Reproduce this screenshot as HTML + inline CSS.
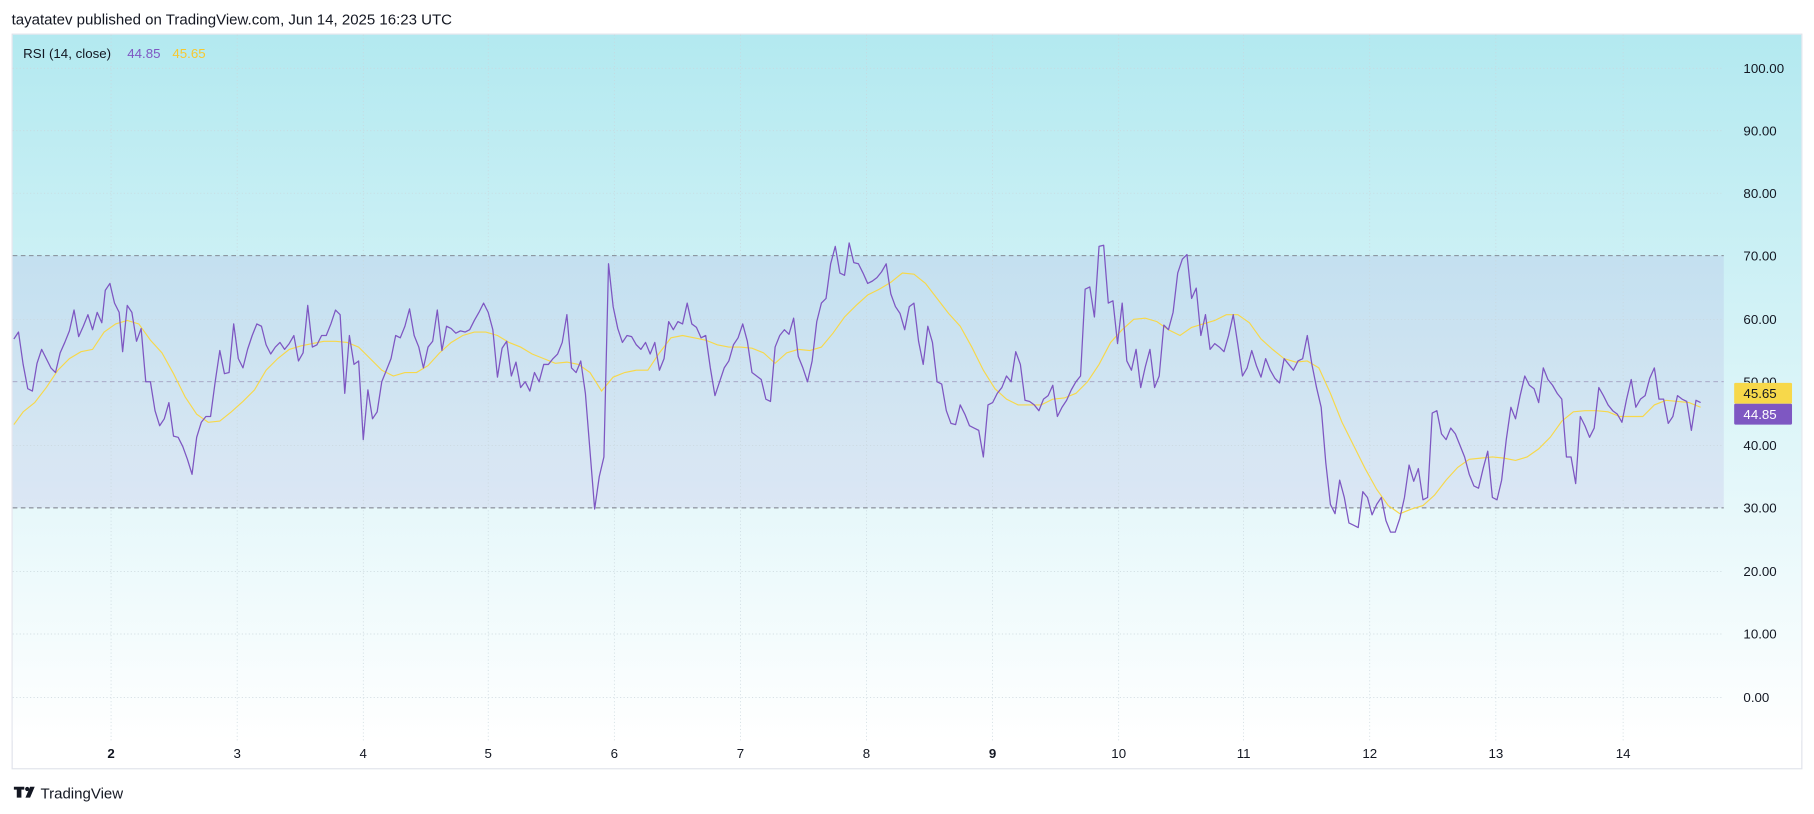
<!DOCTYPE html>
<html><head><meta charset="utf-8"><style>
html,body{margin:0;padding:0;background:#fff;width:1814px;height:814px;overflow:hidden}
svg{display:block;font-family:"Liberation Sans",sans-serif}
</style></head><body>
<svg width="1814" height="814" viewBox="0 0 1568 703.6" xmlns="http://www.w3.org/2000/svg">
<defs>
<linearGradient id="bg" x1="0" y1="0" x2="0" y2="1">
<stop offset="0" stop-color="#b3e9f0"/><stop offset="0.45" stop-color="#d6f3f7"/><stop offset="1" stop-color="#ffffff"/>
</linearGradient>
</defs>
<text x="10" y="21" font-size="13" fill="#131722">tayatatev published on TradingView.com, Jun 14, 2025 16:23 UTC</text>
<rect x="10.5" y="29.5" width="1547" height="635" fill="#fff" stroke="#e0e3eb"/>
<rect x="11" y="30" width="1546" height="610" fill="url(#bg)"/>
<rect x="11" y="221" width="1479" height="218" fill="#7e57c2" fill-opacity="0.1"/>
<g stroke="#c9d6dc" stroke-width="0.6" stroke-dasharray="1,2">
<line x1="96" y1="30" x2="96" y2="640"/><line x1="205" y1="30" x2="205" y2="640"/><line x1="314" y1="30" x2="314" y2="640"/><line x1="422" y1="30" x2="422" y2="640"/><line x1="531" y1="30" x2="531" y2="640"/><line x1="640" y1="30" x2="640" y2="640"/><line x1="749" y1="30" x2="749" y2="640"/><line x1="858" y1="30" x2="858" y2="640"/><line x1="967" y1="30" x2="967" y2="640"/><line x1="1075" y1="30" x2="1075" y2="640"/><line x1="1184" y1="30" x2="1184" y2="640"/><line x1="1293" y1="30" x2="1293" y2="640"/><line x1="1403" y1="30" x2="1403" y2="640"/>
<line x1="11" y1="59" x2="1490" y2="59"/><line x1="11" y1="113" x2="1490" y2="113"/><line x1="11" y1="167" x2="1490" y2="167"/><line x1="11" y1="276" x2="1490" y2="276"/><line x1="11" y1="385" x2="1490" y2="385"/><line x1="11" y1="494" x2="1490" y2="494"/><line x1="11" y1="548" x2="1490" y2="548"/><line x1="11" y1="603" x2="1490" y2="603"/>
</g>
<g stroke="#787b86" stroke-width="0.8" stroke-dasharray="4,3">
<line x1="11" y1="221" x2="1490" y2="221"/><line x1="11" y1="439" x2="1490" y2="439"/>
</g>
<line x1="11" y1="330" x2="1490" y2="330" stroke="#9a92b8" stroke-width="0.6" stroke-dasharray="4,3"/>
<polyline fill="none" stroke="#f7d84a" stroke-width="1" points="12,367 20,356 30,348 40,335 50,320 60,310 70,304 80,302 90,287 100,280 110,277 120,280 130,294 140,305 150,323 160,343 170,358 180,365 190,364 200,356 210,347 220,337 230,320 240,310 250,302 260,299 270,297 280,295 290,295 300,296 310,300 320,310 330,320 340,325 350,322 360,322 370,316 380,305 390,296 400,290 410,287 420,287 430,290 440,296 450,300 460,306 470,310 480,314 490,313 500,315 510,322 520,338 530,326 540,322 550,320 560,320 570,305 580,292 590,290 600,292 610,294 620,298 630,300 640,300 650,301 660,305 670,314 680,305 690,302 700,303 710,300 720,288 730,274 740,264 750,255 760,250 770,244 780,236 790,237 800,245 810,258 820,271 830,282 840,300 850,320 860,336 870,345 880,350 890,350 900,350 910,345 920,344 930,340 940,330 950,315 960,296 970,285 980,276 990,275 1000,278 1010,285 1020,290 1030,283 1040,280 1050,277 1060,272 1070,272 1080,279 1090,293 1100,302 1110,310 1120,313 1130,312 1140,318 1150,340 1160,365 1170,385 1180,405 1190,423 1200,437 1210,444 1220,440 1230,437 1240,428 1250,415 1260,404 1270,397 1280,396 1290,395 1300,396 1310,398 1320,395 1330,388 1340,378 1350,364 1360,356 1370,355 1380,355 1390,356 1400,360 1410,360 1420,360 1430,350 1440,346 1450,347 1460,348 1470,352"/>
<polyline fill="none" stroke="#7e57c2" stroke-width="1.1" stroke-linejoin="round" points="12,293 16,287 20,315 24,336 28,338 32,314 36,302 40,310 44,318 48,322 52,305 56,296 60,286 64,268 68,291 72,282 76,272 80,285 84,270 88,279 91,251 95,245 99,262 103,270 106,304 110,264 114,270 118,295 122,284 126,330 130,330 134,355 138,368 142,362 146,348 150,377 154,378 158,386 162,397 166,410 170,378 174,365 178,360 182,360 186,330 190,303 194,323 198,322 202,280 206,310 210,318 214,302 218,290 222,280 226,282 230,298 234,306 238,300 242,296 246,302 250,297 254,290 258,312 262,305 266,264 270,300 274,298 278,290 282,290 286,280 290,268 294,272 298,340 302,290 306,315 310,312 314,380 318,337 322,362 326,356 330,330 334,320 338,310 342,290 346,292 350,282 354,267 358,290 362,300 366,318 370,300 374,295 378,268 382,303 386,282 390,284 394,288 398,286 402,287 406,285 410,277 414,270 418,262 422,270 426,285 430,326 434,301 438,295 442,325 446,313 450,335 454,330 458,338 462,322 466,330 470,315 474,315 478,310 482,306 486,296 490,272 494,318 498,322 502,312 506,340 510,390 514,440 518,412 522,395 526,228 530,265 534,284 538,296 542,290 546,291 550,298 554,302 558,296 562,306 566,296 570,320 574,310 578,278 582,285 586,278 590,280 594,262 598,280 602,283 606,292 610,290 614,318 618,342 622,330 626,318 630,312 634,298 638,292 642,280 646,295 650,322 654,325 658,328 662,345 666,347 670,300 674,290 678,285 682,289 686,275 690,308 694,318 698,330 702,312 706,278 710,262 714,258 718,228 722,213 726,236 730,238 734,210 738,227 742,228 746,236 750,245 754,243 758,240 762,235 766,228 770,254 774,265 778,271 782,285 786,265 790,262 794,295 798,315 802,282 806,296 810,330 814,332 818,355 822,366 826,367 830,350 834,358 838,368 842,370 846,372 850,395 854,350 858,348 862,340 866,335 870,325 874,330 878,304 882,315 886,346 890,347 894,350 898,355 902,345 906,342 910,333 914,360 918,352 922,346 926,337 930,330 934,325 938,250 942,248 946,274 950,213 954,212 958,262 962,260 966,297 970,262 974,312 978,320 982,302 986,335 990,317 994,302 998,335 1002,325 1006,281 1010,285 1014,270 1018,236 1022,224 1026,220 1030,258 1034,249 1038,290 1042,272 1046,302 1050,297 1054,300 1058,304 1062,290 1066,272 1070,298 1074,325 1078,318 1082,303 1086,316 1090,326 1094,310 1098,320 1102,327 1106,331 1110,310 1114,315 1118,320 1122,312 1126,310 1130,290 1134,315 1138,335 1142,352 1146,400 1150,436 1154,444 1158,415 1162,430 1166,452 1170,454 1174,456 1178,425 1182,430 1186,445 1190,436 1194,430 1198,450 1202,460 1206,460 1210,448 1214,430 1218,402 1222,416 1226,405 1230,432 1234,430 1238,357 1242,355 1246,375 1250,380 1254,370 1258,375 1262,385 1266,395 1270,410 1274,420 1278,422 1282,405 1286,390 1290,430 1294,432 1298,415 1302,380 1306,352 1310,362 1314,342 1318,325 1322,333 1326,336 1330,348 1334,318 1338,328 1342,333 1346,340 1350,345 1354,395 1358,395 1362,418 1366,360 1370,368 1374,378 1378,370 1382,335 1386,342 1390,350 1394,355 1398,358 1402,365 1406,345 1410,328 1414,352 1418,345 1422,342 1426,327 1430,318 1434,345 1438,345 1442,366 1446,360 1450,342 1454,345 1458,347 1462,372 1466,346 1470,348"/>
<g font-size="11.5" fill="#131722">
<text x="1507" y="63">100.00</text><text x="1507" y="117">90.00</text><text x="1507" y="171">80.00</text><text x="1507" y="225">70.00</text><text x="1507" y="280">60.00</text><text x="1507" y="334">50.00</text><text x="1507" y="389">40.00</text><text x="1507" y="443">30.00</text><text x="1507" y="498">20.00</text><text x="1507" y="552">10.00</text><text x="1507" y="607">0.00</text>
</g>
<rect x="1499" y="331" width="50" height="18" fill="#f7d84a" rx="1"/>
<text x="1507" y="344" font-size="11.5" fill="#131722">45.65</text>
<rect x="1499" y="349" width="50" height="18" fill="#7e57c2" rx="1"/>
<text x="1507" y="362" font-size="11.5" fill="#fff">44.85</text>
<text x="20" y="50" font-size="11.5" fill="#131722">RSI (14, close)</text>
<text x="110" y="50" font-size="11.5" fill="#7e57c2">44.85</text>
<text x="149" y="50" font-size="11.5" fill="#f7c830">45.65</text>
<g font-size="11.5" fill="#131722" text-anchor="middle">
<text x="96" y="655" font-weight="bold">2</text><text x="205" y="655">3</text><text x="314" y="655">4</text><text x="422" y="655">5</text><text x="531" y="655">6</text><text x="640" y="655">7</text><text x="749" y="655">8</text><text x="858" y="655" font-weight="bold">9</text><text x="967" y="655">10</text><text x="1075" y="655">11</text><text x="1184" y="655">12</text><text x="1293" y="655">13</text><text x="1403" y="655">14</text>
</g>
<g fill="#131722">
<path d="M12 680h9v2.5h-2.5v7h-4v-7H12z"/><circle cx="23.5" cy="682" r="1.8"/><path d="M26 680h4l-4 9.5h-4z"/>
</g>
<text x="35" y="690" font-size="13" fill="#131722">TradingView</text>
</svg>
</body></html>
